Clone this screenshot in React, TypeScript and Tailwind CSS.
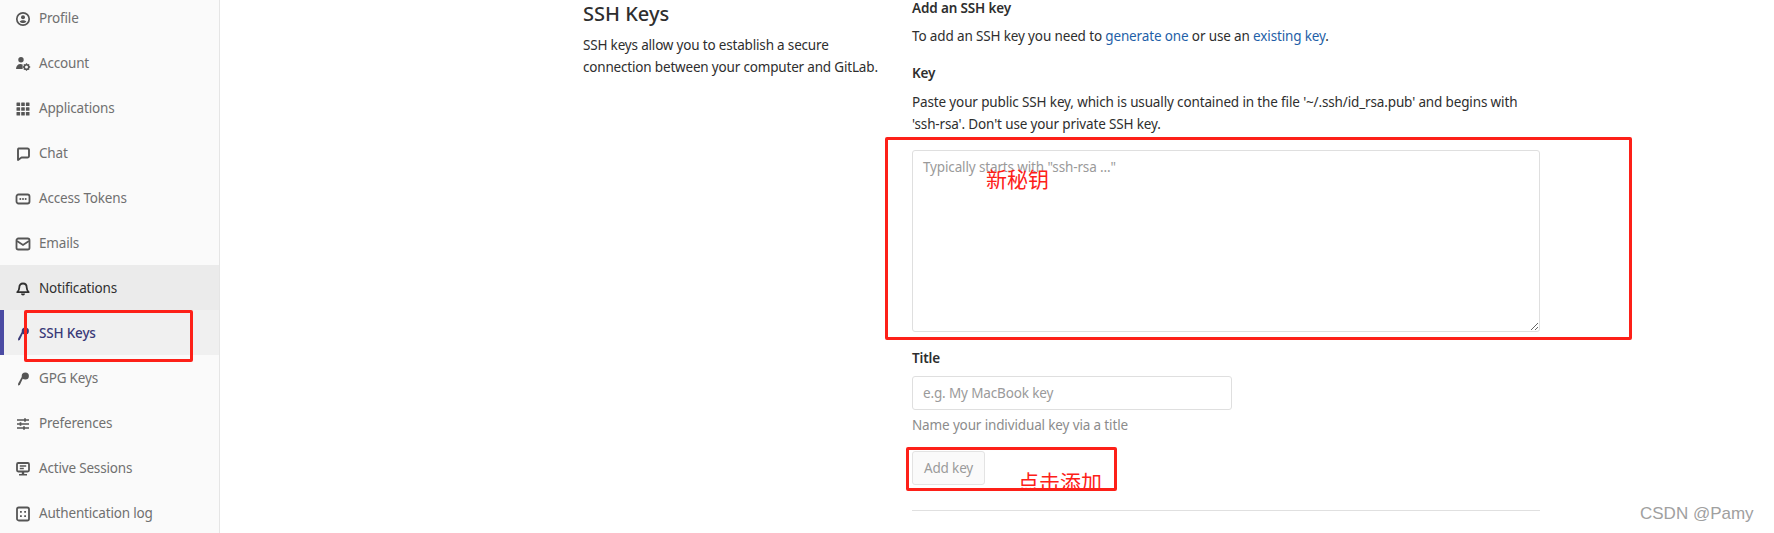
import type { ReactNode } from "react";

const icons: Record<string, ReactNode> = {
  profile: (
    <>
      <circle cx="8" cy="8" r="6.2" fill="none" stroke="currentColor" strokeWidth="1.7" />
      <circle cx="8" cy="6.3" r="2" />
      <path d="M4.6 10.6c1-.9 2.100-1.300 3.400-1.300s2.400.4 3.400 1.300c-.9 1-2.100 1.500-3.400 1.500s-2.500-.5-3.400-1.500z" />
    </>
  ),
  account: (
    <>
      <circle cx="6" cy="3.800" r="2.700" />
      <path d="M1 13c0-3 1.800-5 4.500-5 .8 0 1.500.2 2.100.5v4.500z" />
      <circle cx="11.500" cy="11" r="2.300" fill="none" stroke="currentColor" strokeWidth="1.600" />
      <path d="M11.500 7.300v1.400M11.500 13.300v1.400M7.800 11h1.400M13.800 11h1.400M8.900 8.400l1 1M13.100 12.600l1 1M14.100 8.400l-1 1M9.900 12.600l-1 1" stroke="currentColor" strokeWidth="1.300" />
    </>
  ),
  apps: (
    <>
      {[1.500, 6.200, 10.900].flatMap((y) =>
        [1.500, 6.200, 10.900].map((x) => <rect key={`${x}-${y}`} x={x} y={y} width="3.600" height="3.600" rx=".5" />),
      )}
    </>
  ),
  chat: <path d="M3.500 2.500h9a1.500 1.500 0 0 1 1.500 1.500v6a1.500 1.500 0 0 1-1.500 1.500H6.500L3 14V4a1.500 1.500 0 0 1 .5-1.500z" fill="none" stroke="currentColor" strokeWidth="1.900" strokeLinejoin="round" />,
  token: (
    <>
      <rect x="1.500" y="3.500" width="13" height="9" rx="2" fill="none" stroke="currentColor" strokeWidth="1.800" />
      <circle cx="5.300" cy="8" r="1" />
      <circle cx="8" cy="8" r="1" />
      <circle cx="10.700" cy="8" r="1" />
    </>
  ),
  mail: (
    <>
      <rect x="1.500" y="2.500" width="13" height="11" rx="1.800" fill="none" stroke="currentColor" strokeWidth="1.800" />
      <path d="M2 5l6 4 6-4" fill="none" stroke="currentColor" strokeWidth="1.800" />
    </>
  ),
  bell: (
    <>
      <path d="M8 2.500c2.400 0 3.700 1.800 3.700 4 0 2.300.8 3.500 2 4.700H2.300c1.200-1.200 2-2.400 2-4.700 0-2.200 1.300-4 3.700-4z" fill="none" stroke="currentColor" strokeWidth="1.800" strokeLinejoin="round" />
      <path d="M6 12.500h4c0 1.100-.9 2-2 2s-2-.9-2-2z" />
    </>
  ),
  key: (
    <>
      <circle cx="10.300" cy="5" r="3.600" />
      <path d="M8.200 6.800 L4.800 13.900 L3 14.500 L3.200 12.500 L7 5.500z" />
    </>
  ),
  sliders: (
    <path d="M2 4h12M2 8h12M2 12h12M10 2.300v3.400M5.500 6.300v3.400M9 10.300v3.400" fill="none" stroke="currentColor" strokeWidth="1.700" />
  ),
  monitor: (
    <>
      <rect x="2" y="2" width="12" height="8.500" rx="1.200" fill="none" stroke="currentColor" strokeWidth="1.800" />
      <path d="M4.800 5h6.400M4.800 7.500h4" stroke="currentColor" strokeWidth="1.300" />
      <path d="M6.800 11h2.400v2H12v1.500H4V13h2.800z" />
    </>
  ),
  log: (
    <>
      <rect x="2" y="1.500" width="12" height="13" rx="1.800" fill="none" stroke="currentColor" strokeWidth="1.800" />
      <path d="M5 5h1.800v1.800H5zM9.200 5H11v1.800H9.200zM5 9.200h1.800V11H5zM9.200 9.200H11V11H9.200z" />
    </>
  ),
};

const navItems = [
  { label: "Profile", icon: "profile" },
  { label: "Account", icon: "account" },
  { label: "Applications", icon: "apps" },
  { label: "Chat", icon: "chat" },
  { label: "Access Tokens", icon: "token" },
  { label: "Emails", icon: "mail" },
  { label: "Notifications", icon: "bell", hover: true },
  { label: "SSH Keys", icon: "key", active: true },
  { label: "GPG Keys", icon: "key" },
  { label: "Preferences", icon: "sliders" },
  { label: "Active Sessions", icon: "monitor" },
  { label: "Authentication log", icon: "log" },
];

function NavRow({ label, icon, hover, active }: { label: string; icon: string; hover?: boolean; active?: boolean }) {
  let tone = "text-[#707070]";
  if (hover) tone = "bg-[#ebebeb] text-[#303030]";
  if (active) tone = "bg-[#f0f0f0] text-[#3a3a78] font-medium shadow-[inset_4px_0_0_#4b4ba3]";
  return (
    <div className={`flex h-[45px] shrink-0 items-center gap-2 pt-[2px] pl-[15px] ${tone}`}>
      <svg viewBox="0 0 16 16" className={`h-4 w-4 shrink-0 ${active ? "text-[#3a3a78]" : hover ? "text-[#303030]" : "text-[#555]"}`} fill="currentColor">
        {icons[icon]}
      </svg>
      <span>{label}</span>
    </div>
  );
}

export default function App() {
  return (
    <div className="relative flex h-[533px] overflow-hidden bg-white font-['Noto_Sans','Noto_Sans_CJK_SC',sans-serif] text-[13.5px] tracking-[-0.18px] text-[#2e2e2e]">
      <aside className="flex h-[538px] w-[220px] shrink-0 -translate-y-[5px] flex-col border-r border-[#e5e5e5] bg-[#fafafa]">
        {navItems.map((item) => (
          <NavRow key={item.label} {...item} />
        ))}
      </aside>

      <main className="flex pl-[363px]">
        <section className="w-[329px] shrink-0">
          <h4 className="mt-[1px] text-[20px] leading-[26px] font-medium tracking-normal">SSH Keys</h4>
          <p className="mt-[8px] leading-[21.5px]">
            SSH keys allow you to establish a secure
            <br />
            connection between your computer and GitLab.
          </p>
        </section>

        <section className="flex w-[628px] shrink-0 flex-col tracking-[-0.14px]">
          <h5 className="mt-[1px] text-[13.5px] leading-[15px] font-semibold">Add an SSH key</h5>
          <p className="mt-[10px] leading-[21px]">
            To add an SSH key you need to <a className="text-[#1f5fa8]">generate one</a> or use an <a className="text-[#1f5fa8]">existing key</a>.
          </p>
          <label className="mt-[16px] leading-[21px] font-semibold">Key</label>
          <p className="mt-[7px] leading-[22px]">
            Paste your public SSH key, which is usually contained in the file '~/.ssh/id_rsa.pub' and begins with
            <br />
            'ssh-rsa'. Don't use your private SSH key.
          </p>
          <textarea
            readOnly
            placeholder={'Typically starts with "ssh-rsa ..."'}
            className="mt-[15px] h-[182px] w-[628px] shrink-0 rounded-[3px] border border-[#dfdfdf] bg-white px-[10px] py-[6px] leading-[21px] outline-none placeholder:text-[#9a9a9a]"
          />
          <label className="mt-[16px] leading-[21px] font-semibold">Title</label>
          <input
            readOnly
            placeholder="e.g. My MacBook key"
            className="mt-[7px] h-[34px] w-[320px] shrink-0 rounded-[3px] border border-[#dfdfdf] bg-white px-[10px] outline-none placeholder:text-[#9a9a9a]"
          />
          <p className="mt-[5px] leading-[21px] text-[#8c8c8c]">Name your individual key via a title</p>
          <button className="mt-[15px] h-[34px] w-[73px] shrink-0 rounded-[3px] border border-[#e3e3e3] bg-[#fafafa] text-[#9a9a9a]">Add key</button>
          <hr className="mt-[25px] border-t border-[#e0e0e0]" />
        </section>
      </main>

      {/* red annotations pasted on top of the screenshot */}
      <div className="absolute top-[310px] left-[24px] h-[52px] w-[169px] rounded-[2px] border-[3px] border-[#fd2018]" />
      <div className="absolute top-[137px] left-[885px] h-[203px] w-[747px] rounded-[2px] border-[3px] border-[#fd2018]" />
      <div className="absolute top-[447px] left-[906px] h-[44px] w-[211px] overflow-hidden rounded-[2px] border-[3px] border-[#fd2018]">
        <span className="absolute top-[19px] left-[109px] text-[21px] leading-[26px] tracking-normal whitespace-nowrap text-[#fd2018]">点击添加</span>
      </div>
      <span className="absolute top-[165px] left-[986px] text-[21px] leading-[28px] tracking-normal text-[#fd2018]">新秘钥</span>
      <span className="absolute top-[503px] left-[1640px] font-['Liberation_Sans',sans-serif] text-[17px] leading-[22px] tracking-normal text-[#a0a0a0]">CSDN @Pamy</span>
    </div>
  );
}
